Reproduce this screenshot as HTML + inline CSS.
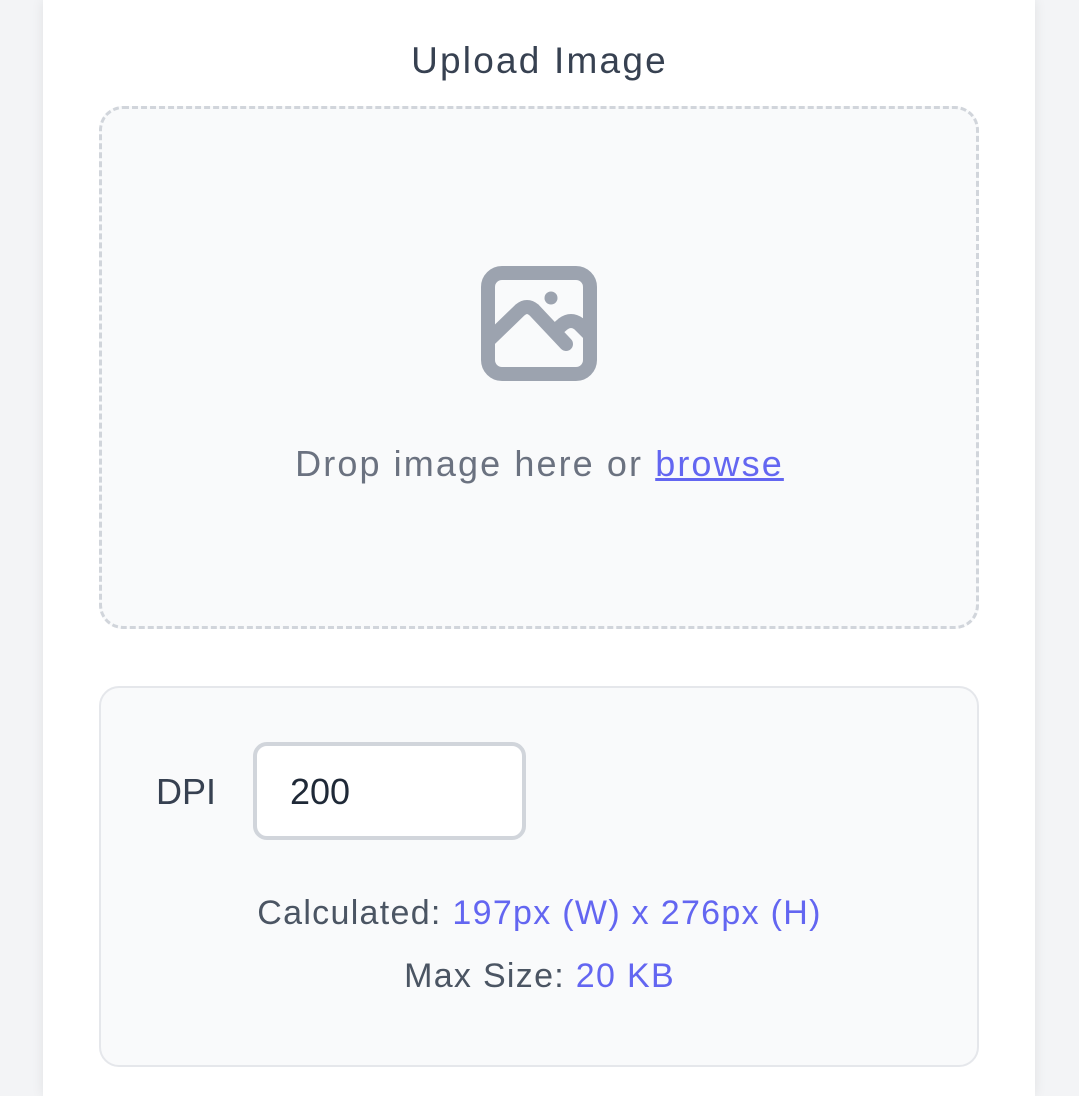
<!DOCTYPE html>
<html><head><style>
html,body{margin:0;padding:0;}
body{width:1079px;height:1096px;background:#f3f4f6;position:relative;overflow:hidden;font-family:"Liberation Sans",sans-serif;}
.card{position:absolute;left:43px;top:0;width:992px;height:1096px;background:#fff;box-shadow:0 0 12px rgba(0,0,0,0.08);}
.t{position:absolute;left:0;width:1079px;text-align:center;white-space:nowrap;}
.drop{position:absolute;left:99px;top:106px;width:874px;height:517px;border:3px dashed #d1d5db;border-radius:24px;background:#f9fafb;}
.box{position:absolute;left:99px;top:686px;width:876px;height:377px;border:2px solid #e5e7eb;border-radius:20px;background:#f9fafb;}
.inp{position:absolute;left:253px;top:742px;width:265px;height:90px;border:4px solid #d1d5db;border-radius:14px;background:#fff;}
.b{color:#6366f1;}
</style></head><body>
<div class="card"></div>
<div class="t" style="top:40px;font-size:37px;letter-spacing:2.2px;color:#374151;">Upload Image</div>
<div class="drop"></div>
<svg style="position:absolute;left:0;top:0" width="1079" height="1096">
<g fill="none" stroke="#9ca3af" stroke-width="14" stroke-linecap="round" stroke-linejoin="round">
<rect x="488" y="273" width="102" height="101" rx="14"/>
<path d="M489 340 L520 310 Q527 304 534 310 L566 344"/>
<path d="M555 331 L563 324 Q571 318 579 324 L589 334"/>
</g>
<circle cx="551" cy="298" r="6.5" fill="#9ca3af"/>
</svg>
<div class="t" style="top:443px;font-size:36px;letter-spacing:2.1px;color:#6b7280;">Drop image here or <span class="b" style="text-decoration:underline;">browse</span></div>
<div class="box"></div>
<div style="position:absolute;left:156px;top:771px;font-size:36px;color:#374151;">DPI</div>
<div class="inp"></div>
<div style="position:absolute;left:290px;top:771px;font-size:36px;color:#1f2937;">200</div>
<div class="t" style="top:894px;font-size:34px;letter-spacing:1.3px;color:#4b5563;">Calculated: <span class="b">197px (W) x 276px (H)</span></div>
<div class="t" style="top:957px;font-size:34px;letter-spacing:1.3px;color:#4b5563;">Max Size: <span class="b">20 KB</span></div>
</body></html>
